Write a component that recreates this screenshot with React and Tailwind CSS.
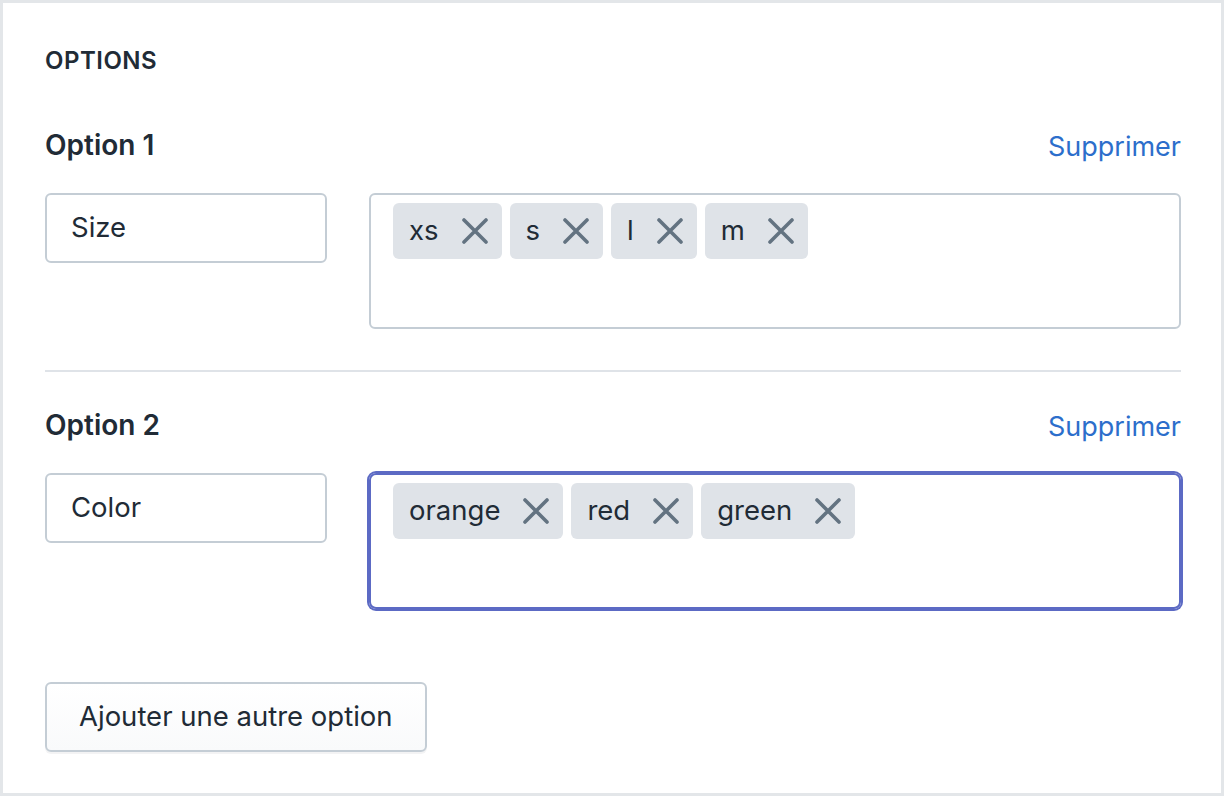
import React from 'react';

const font = { fontFamily: 'Inter, "Noto Sans", sans-serif' };

function XIcon() {
  return (
    <svg width="26" height="26" viewBox="0 0 26 26" className="shrink-0">
      <path d="M2 2L24 24M24 2L2 24" stroke="#637381" strokeWidth="3.6" strokeLinecap="round" />
    </svg>
  );
}

function Tag({ label }) {
  return (
    <div className="flex items-center h-[56px] rounded-[6px] bg-[#dfe3e8] pl-[16px] pr-[14px]">
      <span className="text-[27.5px] leading-none text-[#212b36]">{label}</span>
      <span className="ml-[23px] flex"><XIcon /></span>
    </div>
  );
}

function OptionRow({ title, name, values, focused }) {
  return (
    <div>
      <div className="flex items-center justify-between h-[40px]">
        <h2 className="text-[28px] leading-[40px] font-semibold text-[#212b36]">{title}</h2>
        <a className="text-[27px] leading-[40px] text-[#2c6ecb] translate-y-[2px]">Supprimer</a>
      </div>
      <div className="mt-[28px] flex gap-[42px]">
        <div className="w-[282px] h-[70px] shrink-0 rounded-[6px] border-2 border-[#c4cdd5] flex items-center px-[24px] text-[27.5px] text-[#212b36]">
          {name}
        </div>
        <div
          className={
            focused
              ? 'flex-1 h-[136px] rounded-[7px] border-2 border-[#5c6ac4] ring-[2px] ring-[#5c6ac4] pl-[22px] pt-[8px] flex items-start gap-[8px]'
              : 'flex-1 h-[136px] rounded-[6px] border-2 border-[#c4cdd5] pl-[22px] pt-[8px] flex items-start gap-[8px]'
          }
        >
          {values.map((v) => <Tag key={v} label={v} />)}
        </div>
      </div>
    </div>
  );
}

export default function App() {
  return (
    <div style={font} className="w-[1224px] h-[796px] bg-white">
      <div className="w-full h-full border-[3px] border-[#e3e6e9] pl-[42px] pr-[40px] pt-[42px]">
        <h1 className="text-[24px] leading-[32px] font-semibold uppercase tracking-[0.5px] text-[#212b36]">Options</h1>
        <div className="mt-[48px]">
          <OptionRow title="Option 1" name="Size" values={['xs', 's', 'l', 'm']} />
        </div>
        <div className="mt-[41px] border-t-2 border-[#dfe3e8]" />
        <div className="mt-[33px]">
          <OptionRow title="Option 2" name="Color" values={['orange', 'red', 'green']} focused />
        </div>
        <button className="mt-[73px] h-[70px] px-[32px] rounded-[6px] border-2 border-[#c4cdd5] bg-gradient-to-b from-white to-[#f9fafb] shadow-[0_2px_0_rgba(22,29,37,0.05)] text-[27.5px] text-[#212b36]">
          Ajouter une autre option
        </button>
      </div>
    </div>
  );
}
